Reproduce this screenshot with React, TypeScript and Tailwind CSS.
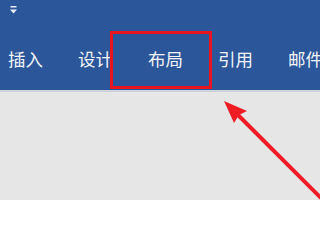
export default function App() {
  const tabs = ["插入", "设计", "布局", "引用", "邮件"];

  return (
    <div className="relative h-[200px] w-[320px] overflow-hidden bg-[#e6e6e6] font-['Noto_Sans_CJK_SC',sans-serif]">
      <div className="h-[90px] bg-[#2b579a]">
        <div className="flex h-[36px] pl-[10px] pt-[6px]">
          <svg width="7" height="8" viewBox="0 0 7 8" className="text-[#e8eef7]">
            <rect x="0.5" y="0" width="6" height="1.5" fill="currentColor" />
            <path d="M0 3.5 H7 L3.5 7.5 Z" fill="currentColor" />
          </svg>
        </div>
        <div className="flex h-[46px] items-center gap-[35px] whitespace-nowrap pl-[8px] text-[17.5px] leading-none text-[#f2f4f8]">
          {tabs.map((t) => (
            <span key={t}>{t}</span>
          ))}
        </div>
      </div>
      <div className="h-[2px] bg-[#cdd3dc]" />

      <div className="absolute left-[110px] top-[31px] h-[58px] w-[102px] border-[3px] border-[#e8141e]" />

      <svg className="absolute left-0 top-0" width="320" height="200" viewBox="0 0 320 200">
        <line x1="232" y1="109" x2="324" y2="201" stroke="#ee1c25" strokeWidth="4" />
        <path d="M224 101 L247 111 L239 115 L234 123 Z" fill="#ee1c25" />
      </svg>
    </div>
  );
}
